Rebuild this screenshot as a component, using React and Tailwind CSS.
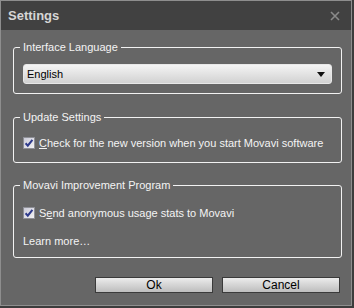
import React from 'react'

const CheckBox = () => (
  <svg width="12" height="12" viewBox="0 0 12 12" className="shrink-0">
    <defs>
      <linearGradient id="cbg" x1="0" y1="0" x2="1" y2="1">
        <stop offset="0" stopColor="#c9c9d6" />
        <stop offset="1" stopColor="#f4f4f6" />
      </linearGradient>
    </defs>
    <rect x="0.5" y="0.5" width="11" height="11" fill="url(#cbg)" stroke="#8e8f96" />
    <path d="M2.6 6.2 L4.8 8.6 L9.4 2.8" fill="none" stroke="#2e3a8c" strokeWidth="2" />
  </svg>
)

const Group = ({ title, className, children }) => (
  <fieldset className={`mx-[12px] w-[329px] rounded-[3px] border border-[#f2f2f2] ${className}`}>
    <legend className="-ml-[3px] px-[3px] leading-[14px]">{title}</legend>
    {children}
  </fieldset>
)

export default function App() {
  return (
    <div className="w-[354px] h-[308px] bg-[#3c3c3c] text-[11px] text-[#f4f4f4] whitespace-nowrap" style={{ fontFamily: '"Liberation Sans", Arial, sans-serif' }}>
      <div className="w-[352px] h-[306px] border border-[#8e8e8e] bg-[#666666] flex flex-col">
        {/* title bar */}
        <div className="h-[29px] bg-[#414141] flex items-center justify-between pl-[7px] pr-[11px]">
          <span className="text-[13px] font-bold text-[#d6d6d6]">Settings</span>
          <svg width="10" height="10" viewBox="0 0 10 10">
            <path d="M1 1 L9 9 M9 1 L1 9" stroke="#8a8a8a" strokeWidth="1.6" />
          </svg>
        </div>

        {/* Interface Language */}
        <Group title="Interface Language" className="mt-[10px] px-[9px] pt-[10px] pb-[9px]">
          <div className="h-[20px] rounded-[3px] border border-[#e8e8e8] bg-gradient-to-b from-[#f4f4f4] to-[#d2d2d2] flex items-center justify-between pl-[3px] pr-[6px] text-black">
            <span>English</span>
            <svg width="8" height="5" viewBox="0 0 8 5">
              <path d="M0 0 H8 L4 5 Z" fill="#111" />
            </svg>
          </div>
        </Group>

        {/* Update Settings */}
        <Group title="Update Settings" className="mt-[16px] px-[9px] pt-[12px] pb-[12px]">
          <label className="flex items-center gap-[4px] h-[14px]">
            <CheckBox />
            <span>
              <span className="underline">C</span>heck for the new version when you start Movavi software
            </span>
          </label>
        </Group>

        {/* Movavi Improvement Program */}
        <Group title="Movavi Improvement Program" className="mt-[15px] px-[9px] pt-[14px] pb-[9px]">
          <label className="flex items-center gap-[4px] h-[14px]">
            <CheckBox />
            <span>
              S<span className="underline">e</span>nd anonymous usage stats to Movavi
            </span>
          </label>
          <div className="mt-[14px] h-[14px] leading-[14px]">Learn more…</div>
        </Group>

        {/* buttons */}
        <div className="mt-[19px] flex justify-end gap-[9px] pr-[11px]">
          <button className="w-[118px] h-[16px] border border-[#3a3a3a] bg-gradient-to-b from-[#ececec] to-[#bdbdbd] text-black text-[12px] leading-[14px]">Ok</button>
          <button className="w-[118px] h-[16px] border border-[#3a3a3a] bg-gradient-to-b from-[#ececec] to-[#bdbdbd] text-black text-[12px] leading-[14px]">Cancel</button>
        </div>
      </div>
    </div>
  )
}
